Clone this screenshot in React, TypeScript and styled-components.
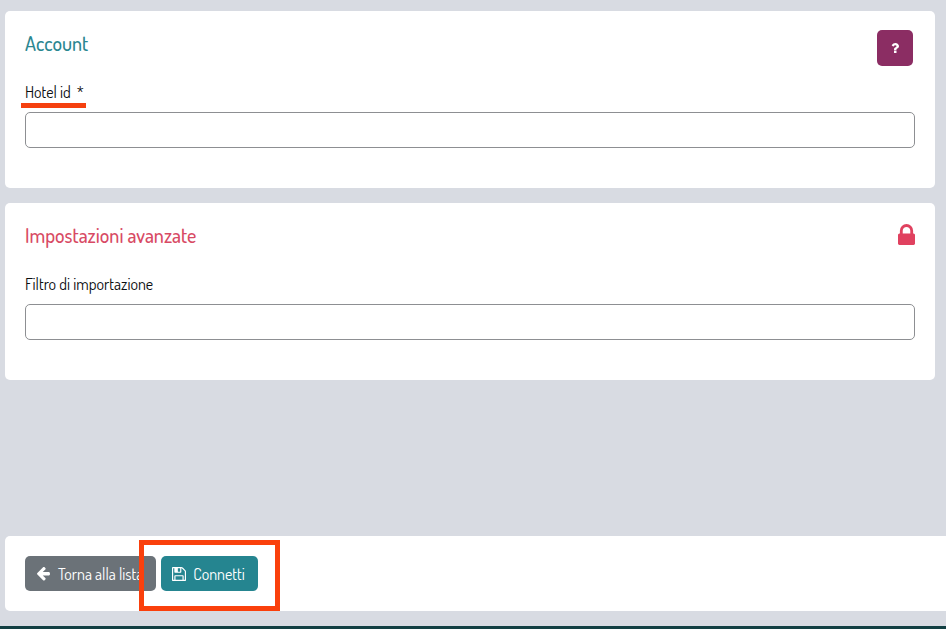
import React from "react";
import styled, { createGlobalStyle } from "styled-components";

const GlobalStyle = createGlobalStyle`
  *, *::before, *::after { box-sizing: border-box; }
  body {
    margin: 0;
    background: #d8dbe2;
    color: #0c0e10;
    font-family: Dosis, Lato, "Open Sans", sans-serif;
    font-size: 16px;
    font-weight: 400;
    line-height: 20px;
  }
`;

const Page = styled.div`
  display: flex;
  flex-direction: column;
  min-height: 100vh;
  border-bottom: 3px solid #123f42;
  padding: 11px 0 15px 5px;
`;

const Sections = styled.main`
  display: flex;
  flex-direction: column;
  gap: 15px;
  margin-right: 11px;
`;

const Card = styled.section`
  background: #fff;
  border-radius: 5px;
  padding: 19px 20px 40px;
`;

const CardHeader = styled.header`
  display: flex;
  justify-content: space-between;
  align-items: flex-start;
  height: 50px;
`;

const Title = styled.h2<{ $color: string }>`
  margin: 0;
  color: ${(p) => p.$color};
  font-size: 20px;
  line-height: 26px;
  font-weight: 500;
`;

const HelpButton = styled.button`
  display: grid;
  place-items: center;
  width: 36px;
  height: 36px;
  margin-right: 2px;
  padding: 0;
  border: 0;
  border-radius: 5px;
  background: #8b2d63;
  color: #fff;
  cursor: pointer;
`;

const LockMark = styled.span`
  display: flex;
  padding-top: 2px;
  color: #e0415f;
`;

const Label = styled.label`
  position: relative;
  display: block;
  width: max-content;
  line-height: 24px;
  margin-bottom: 8px;
`;

const Required = styled.span`
  margin-left: 6px;
`;

const Underline = styled.span`
  position: absolute;
  left: -4px;
  right: -2px;
  bottom: -4px;
  height: 5px;
  background: #f5400f;
`;

const TextInput = styled.input`
  display: block;
  width: 100%;
  height: 36px;
  padding: 0 12px;
  border: 1px solid #8d8f92;
  border-radius: 5px;
  background: #fff;
  font: inherit;
`;

const ActionBar = styled.footer`
  display: flex;
  gap: 5px;
  margin-top: auto;
  padding: 20px;
  border-radius: 5px 0 0 5px;
  background: #fff;
`;

const ActionButton = styled.button<{ $color: string }>`
  display: flex;
  align-items: center;
  gap: 7px;
  height: 35px;
  padding: 0 13px 0 11px;
  border: 0;
  border-radius: 5px;
  background: ${(p) => p.$color};
  color: #fff;
  font: inherit;
  white-space: nowrap;
  cursor: pointer;
`;

const Highlighted = styled.div`
  position: relative;
`;

const HighlightFrame = styled.span`
  position: absolute;
  inset: -16px -22px -20px;
  border: 5px solid #fa400c;
  pointer-events: none;
`;

type IconProps = { box: string; width: number; height: number; d: string };

const Icon = ({ box, width, height, d }: IconProps) => (
  <svg viewBox={box} width={width} height={height} fill="currentColor" aria-hidden="true">
    <path d={d} />
  </svg>
);

const QUESTION =
  "M1088 1256v240q0 16-12 28t-28 12h-240q-16 0-28-12t-12-28v-240q0-16 12-28t28-12h240q16 0 28 12t12 28zm316-600q0 54-15.5 101t-35 76.5-55 59.5-57.5 43.5-61 35.5q-41 23-68.5 65t-27.5 67q0 17-12 32.5t-28 15.5h-240q-15 0-25.5-18.5t-10.5-37.5v-45q0-83 65-156.5t143-108.5q59-27 84-56t25-76q0-42-46.5-74t-107.5-32q-65 0-108 29-35 25-107 115-13 16-31 16-12 0-25-8l-164-125q-13-10-15.5-25t5.5-28q160-266 464-266 80 0 161 31t146 83 106 127.5 41 158.5z";
const LOCK =
  "M640 768h512v-192q0-106-75-181t-181-75-181 75-75 181v192zm832 96v576q0 40-28 68t-68 28h-960q-40 0-68-28t-28-68v-576q0-40 28-68t68-28h32v-192q0-184 132-316t316-132 316 132 132 316v192h32q40 0 68 28t28 68z";
const ARROW =
  "M1664 896v128q0 53-32.5 90.5t-84.5 37.5h-704l293 294q38 36 38 90t-38 90l-75 76q-37 37-90 37-52 0-91-37l-651-652q-37-37-37-90 0-52 37-91l651-650q38-38 91-38 52 0 90 38l75 74q38 38 38 91t-38 91l-293 293h704q52 0 84.5 37.5t32.5 90.5z";
const SAVE =
  "M512 1536h768v-384h-768v384zm896 0h128v-896q0-14-10-38.5t-20-34.5l-281-281q-10-10-34-20t-39-10v416q0 40-28 68t-68 28h-576q-40 0-68-28t-28-68v-416h-128v1280h128v-416q0-40 28-68t68-28h832q40 0 68 28t28 68v416zm-384-928v-320q0-13-9.5-22.5t-22.5-9.5h-192q-13 0-22.5 9.5t-9.5 22.5v320q0 13 9.5 22.5t22.5 9.5h192q13 0 22.5-9.5t9.5-22.5zm640 32v928q0 40-28 68t-68 28h-1344q-40 0-68-28t-28-68v-1344q0-40 28-68t68-28h928q40 0 88 20t76 48l280 280q28 28 48 76t20 88z";

export default function App() {
  return (
    <>
      <GlobalStyle />
      <Page>
        <Sections>
          <Card>
            <CardHeader>
              <Title $color="#2b8791">Account</Title>
              <HelpButton type="button" aria-label="Aiuto">
                <Icon box="384 256 1024 1280" width={8} height={10} d={QUESTION} />
              </HelpButton>
            </CardHeader>
            <Label htmlFor="hotel-id">
              Hotel id<Required>*</Required>
              <Underline />
            </Label>
            <TextInput id="hotel-id" type="text" required />
          </Card>
          <Card>
            <CardHeader>
              <Title $color="#d84a64">Impostazioni avanzate</Title>
              <LockMark>
                <Icon box="320 128 1152 1408" width={17} height={21} d={LOCK} />
              </LockMark>
            </CardHeader>
            <Label htmlFor="import-filter">Filtro di importazione</Label>
            <TextInput id="import-filter" type="text" />
          </Card>
        </Sections>
        <ActionBar>
          <ActionButton type="button" $color="#6b7278">
            <Icon box="79 189 1699 1600" width={15} height={14} d={ARROW} />
            Torna alla lista
          </ActionButton>
          <Highlighted>
            <ActionButton type="submit" $color="#258590">
              <Icon box="128 128 1536 1536" width={14} height={14} d={SAVE} />
              Connetti
            </ActionButton>
            <HighlightFrame />
          </Highlighted>
        </ActionBar>
      </Page>
    </>
  );
}
